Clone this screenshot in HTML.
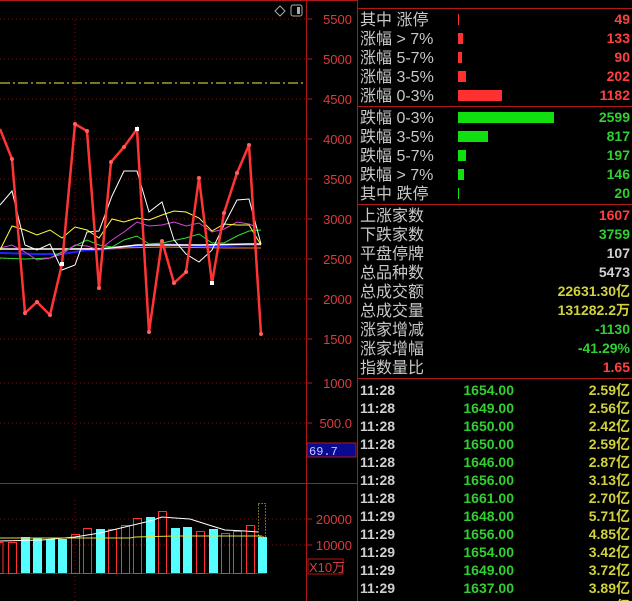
<!DOCTYPE html>
<html><head><meta charset="utf-8"><style>
*{margin:0;padding:0}
body{width:632px;height:601px;background:#000;overflow:hidden;position:relative;font-family:"Liberation Sans","Noto Sans CJK SC",sans-serif}
svg{position:absolute;left:0;top:0}
.t{font-family:"Liberation Mono","Noto Sans CJK SC",monospace}
</style></head><body>
<svg width="632" height="601" xmlns="http://www.w3.org/2000/svg">
<g stroke="#7a1010" stroke-dasharray="1,3" stroke-width="1">
<line x1="0" y1="19" x2="306" y2="19"/><line x1="0" y1="59" x2="306" y2="59"/><line x1="0" y1="99" x2="306" y2="99"/><line x1="0" y1="139" x2="306" y2="139"/><line x1="0" y1="179" x2="306" y2="179"/><line x1="0" y1="219" x2="306" y2="219"/><line x1="0" y1="259" x2="306" y2="259"/><line x1="0" y1="299" x2="306" y2="299"/><line x1="0" y1="339" x2="306" y2="339"/><line x1="0" y1="383" x2="306" y2="383"/><line x1="0" y1="423" x2="306" y2="423"/><line x1="0" y1="519" x2="306" y2="519"/><line x1="0" y1="545" x2="306" y2="545"/>
<line x1="75" y1="20" x2="75" y2="470"/><line x1="75" y1="500" x2="75" y2="601"/>
</g>
<line x1="0" y1="83" x2="306" y2="83" stroke="#f0f040" stroke-dasharray="10,3,2,3"/>
<g stroke="#b01818" fill="none">
<line x1="0" y1="0.5" x2="357" y2="0.5"/>
<line x1="306.5" y1="0" x2="306.5" y2="601"/>
<line x1="357.5" y1="0" x2="357.5" y2="601"/>
<line x1="0" y1="483.5" x2="357" y2="483.5"/>
<line x1="357" y1="8.5" x2="632" y2="8.5"/><line x1="357" y1="106.5" x2="632" y2="106.5"/><line x1="357" y1="204.5" x2="632" y2="204.5"/><line x1="357" y1="378.5" x2="632" y2="378.5"/>
<line x1="0" y1="573.5" x2="266" y2="573.5"/>
<line x1="306" y1="19" x2="312" y2="19"/><line x1="306" y1="59" x2="312" y2="59"/><line x1="306" y1="99" x2="312" y2="99"/><line x1="306" y1="139" x2="312" y2="139"/><line x1="306" y1="179" x2="312" y2="179"/><line x1="306" y1="219" x2="312" y2="219"/><line x1="306" y1="259" x2="312" y2="259"/><line x1="306" y1="299" x2="312" y2="299"/><line x1="306" y1="339" x2="312" y2="339"/><line x1="306" y1="383" x2="312" y2="383"/><line x1="306" y1="423" x2="312" y2="423"/><line x1="306" y1="519" x2="312" y2="519"/><line x1="306" y1="545" x2="312" y2="545"/>
</g>
<rect x="307" y="443" width="49" height="14" fill="#0a0a90" stroke="#b01818"/>
<text x="309" y="455" fill="#c8c8ff" font-size="12" class="t">69.7</text>
<rect x="308" y="559" width="35" height="15" fill="none" stroke="#b01818"/>
<text x="309" y="572" fill="#d04040" font-size="13">X10万</text>
<g fill="#e03a3a" font-size="13" text-anchor="end">
<text x="352" y="24">5500</text><text x="352" y="64">5000</text><text x="352" y="104">4500</text><text x="352" y="144">4000</text><text x="352" y="184">3500</text><text x="352" y="224">3000</text><text x="352" y="264">2500</text><text x="352" y="304">2000</text><text x="352" y="344">1500</text><text x="352" y="388">1000</text><text x="352" y="428">500.0</text><text x="352" y="524">20000</text><text x="352" y="550">10000</text>
</g>
<path d="M275 11 l5 -5 l5 5 l-5 5z" fill="none" stroke="#aaa"/>
<rect x="291" y="5" width="11" height="11" rx="2" fill="none" stroke="#aaa"/><rect x="297" y="7" width="3" height="7" fill="#aaa"/>
<g stroke="#ff3030" fill="none">
<rect x="-1" y="542.5" width="4" height="31"/><rect x="8.5" y="542.5" width="8" height="31"/>
<rect x="71.5" y="534.5" width="8" height="39"/><rect x="83.5" y="528.5" width="8" height="45"/>
<rect x="108.5" y="529.5" width="8" height="44"/><rect x="121.5" y="525.5" width="8" height="48"/><rect x="133.5" y="518.5" width="8" height="55"/>
<rect x="158.5" y="511.5" width="8" height="62"/><rect x="196.5" y="531.5" width="8" height="42"/>
<rect x="221.5" y="533.5" width="8" height="40"/><rect x="233.5" y="531.5" width="8" height="42"/><rect x="246.5" y="525.5" width="8" height="48"/>
</g>
<g fill="#55ffff">
<rect x="21" y="537" width="9" height="36"/><rect x="33" y="538" width="9" height="35"/><rect x="46" y="539" width="9" height="34"/><rect x="58" y="539" width="9" height="34"/><rect x="96" y="529" width="9" height="44"/><rect x="146" y="517" width="9" height="56"/><rect x="171" y="528" width="9" height="45"/><rect x="183" y="527" width="9" height="46"/><rect x="209" y="529" width="9" height="44"/><rect x="258" y="537" width="9" height="36"/>
</g>
<rect x="258.5" y="503.5" width="7" height="33" fill="none" stroke="#dddd40" stroke-dasharray="1,2"/>
<polyline points="0,541 42,540 75,537 100,533 125,527 150,521 162,517 175,518 190,519 212,526 225,530 245,531 258,532" fill="none" stroke="#fff"/>
<polyline points="0,538 130,538 135,537 175,536 262,536" fill="none" stroke="#e0e040"/>
<g fill="none" stroke-width="1">
<polyline stroke="#2020ff" stroke-width="2" points="0,253 37,254 62,254 87,250 112,249 137,246 162,244 199,246 224,246 249,245 261,245"/>
<polyline stroke="#ff8020" points="0,249 62,249 124,248 162,247 224,248 261,248"/>
<polyline stroke="#ffffff" stroke-width="1.5" points="0,249 60,249 100,249 137,245 200,245 249,244 261,244"/>
<polyline stroke="#30e030" points="0,258 25,259 50,258 62,252 87,240 99,245 112,247 124,240 137,236 149,244 162,243 186,238 199,234 212,243 224,243 237,236 249,231 261,230"/>
<polyline stroke="#e040e0" points="0,248 12,245 25,252 37,260 50,258 62,254 75,245 87,246 99,250 112,240 124,232 137,222 149,226 162,225 174,222 186,226 199,223 212,232 224,229 237,222 249,224 256,227"/>
<polyline stroke="#ffff40" points="0,250 12,226 25,230 37,235 50,230 62,238 75,227 87,230 99,238 112,219 124,222 137,218 149,220 162,215 174,211 186,212 199,218 212,231 224,224 237,225 249,225 261,245"/>
<polyline stroke="#ffffff" points="0,205 12,191 25,245 37,250 50,244 62,270 75,265 87,232 99,231 112,196 124,171 137,171 149,212 162,202 174,240 186,254 199,262 212,250 224,225 237,200 249,199 261,244"/>
</g>
<polyline fill="none" stroke="#ff3535" stroke-width="2.5" points="0,129 12,159 25,313 37,302 50,315 62,264 75,124 87,131 99,288 111,162 124,147 137,129 149,332 162,241 174,283 186,272 199,178 212,283 224,213 237,173 249,145 261,334"/>
<g fill="#ff6060"><circle cx="12" cy="159" r="2"/><circle cx="25" cy="313" r="2"/><circle cx="37" cy="302" r="2"/><circle cx="50" cy="315" r="2"/><circle cx="75" cy="124" r="2"/><circle cx="87" cy="131" r="2"/><circle cx="99" cy="288" r="2"/><circle cx="111" cy="162" r="2"/><circle cx="124" cy="147" r="2"/><circle cx="149" cy="332" r="2"/><circle cx="162" cy="241" r="2"/><circle cx="174" cy="283" r="2"/><circle cx="186" cy="272" r="2"/><circle cx="199" cy="178" r="2"/><circle cx="224" cy="213" r="2"/><circle cx="237" cy="173" r="2"/><circle cx="249" cy="145" r="2"/><circle cx="261" cy="334" r="2"/></g>
<g fill="#fff"><rect x="60" y="262" width="4" height="4"/><rect x="135" y="127" width="4" height="4"/><rect x="210" y="281" width="4" height="4"/></g>
<g fill="#ff3030"><rect x="458" y="14" width="1" height="11"/><rect x="458" y="33" width="5" height="11"/><rect x="458" y="52" width="4" height="11"/><rect x="458" y="71" width="8" height="11"/><rect x="458" y="90" width="44" height="11"/></g>
<g fill="#10e010"><rect x="458" y="112" width="96" height="11"/><rect x="458" y="131" width="30" height="11"/><rect x="458" y="150" width="8" height="11"/><rect x="458" y="169" width="6" height="11"/><rect x="458" y="188" width="1" height="11"/></g>
<g font-size="16" fill="#c8c8c8">
<text x="360" y="25">其中 涨停</text><text x="360" y="44">涨幅 &gt; 7%</text><text x="360" y="63">涨幅 5-7%</text><text x="360" y="82">涨幅 3-5%</text><text x="360" y="101">涨幅 0-3%</text>
<text x="360" y="123">跌幅 0-3%</text><text x="360" y="142">跌幅 3-5%</text><text x="360" y="161">跌幅 5-7%</text><text x="360" y="180">跌幅 &gt; 7%</text><text x="360" y="199">其中 跌停</text>
<text x="360" y="221">上涨家数</text><text x="360" y="240">下跌家数</text><text x="360" y="259">平盘停牌</text><text x="360" y="278">总品种数</text><text x="360" y="297">总成交额</text><text x="360" y="316">总成交量</text><text x="360" y="335">涨家增减</text><text x="360" y="354">涨家增幅</text><text x="360" y="373">指数量比</text>
</g>
<g font-size="14" font-weight="bold" text-anchor="end">
<g fill="#ff4040"><text x="630" y="24">49</text><text x="630" y="43">133</text><text x="630" y="62">90</text><text x="630" y="81">202</text><text x="630" y="100">1182</text><text x="630" y="220">1607</text><text x="630" y="372">1.65</text></g>
<g fill="#30d030"><text x="630" y="122">2599</text><text x="630" y="141">817</text><text x="630" y="160">197</text><text x="630" y="179">146</text><text x="630" y="198">20</text><text x="630" y="239">3759</text><text x="630" y="334">-1130</text><text x="630" y="353">-41.29%</text></g>
<g fill="#d0d0d0"><text x="630" y="258">107</text><text x="630" y="277">5473</text></g>
<g fill="#d0d040"><text x="630" y="296">22631.30亿</text><text x="630" y="315">131282.2万</text></g>
</g>
<g font-size="14" font-weight="bold">
<g fill="#d0d0d0">
<text x="360" y="395">11:28</text><text x="360" y="413">11:28</text><text x="360" y="431">11:28</text><text x="360" y="449">11:28</text><text x="360" y="467">11:28</text><text x="360" y="485">11:28</text><text x="360" y="503">11:28</text><text x="360" y="521">11:29</text><text x="360" y="539">11:29</text><text x="360" y="557">11:29</text><text x="360" y="575">11:29</text><text x="360" y="593">11:29</text><text x="360" y="611">11:29</text>
</g>
<g fill="#30d030" text-anchor="end">
<text x="514" y="395">1654.00</text><text x="514" y="413">1649.00</text><text x="514" y="431">1650.00</text><text x="514" y="449">1650.00</text><text x="514" y="467">1646.00</text><text x="514" y="485">1656.00</text><text x="514" y="503">1661.00</text><text x="514" y="521">1648.00</text><text x="514" y="539">1656.00</text><text x="514" y="557">1654.00</text><text x="514" y="575">1649.00</text><text x="514" y="593">1637.00</text><text x="514" y="611">1637.00</text>
</g>
<g fill="#d0d040" text-anchor="end">
<text x="630" y="395">2.59亿</text><text x="630" y="413">2.56亿</text><text x="630" y="431">2.42亿</text><text x="630" y="449">2.59亿</text><text x="630" y="467">2.87亿</text><text x="630" y="485">3.13亿</text><text x="630" y="503">2.70亿</text><text x="630" y="521">5.71亿</text><text x="630" y="539">4.85亿</text><text x="630" y="557">3.42亿</text><text x="630" y="575">3.72亿</text><text x="630" y="593">3.89亿</text><text x="630" y="611">3.89亿</text>
</g>
</g>
</svg>
</body></html>
